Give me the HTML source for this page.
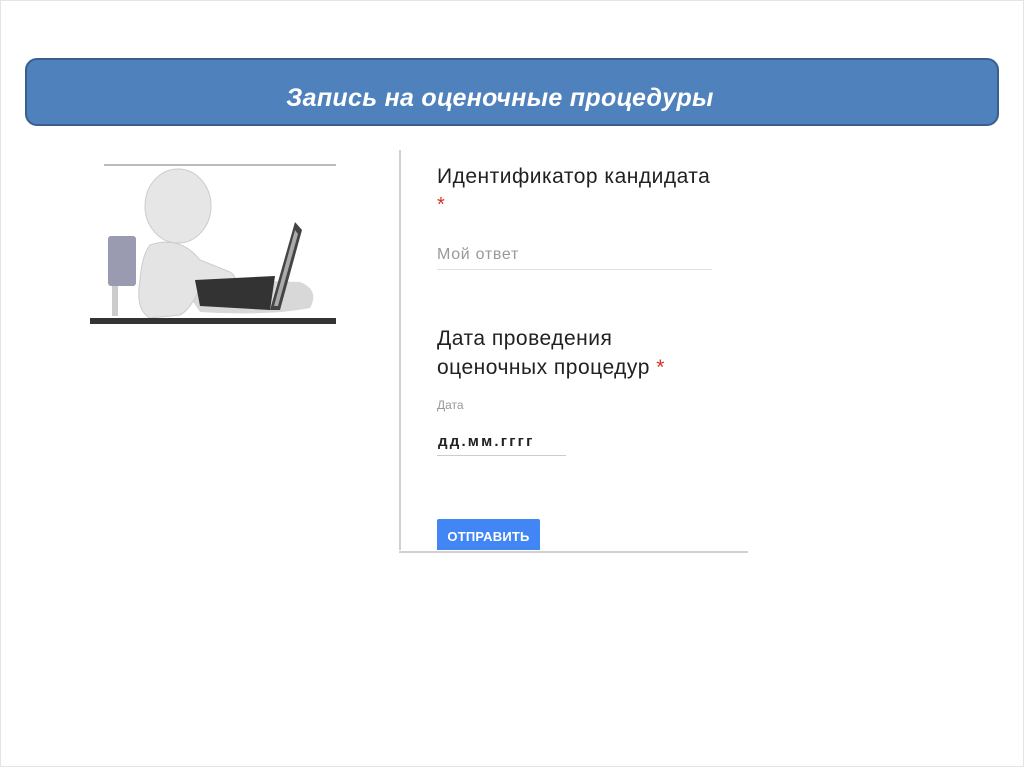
<!DOCTYPE html>
<html><head><meta charset="utf-8"><style>
body{margin:0;width:1024px;height:767px;background:#fff;position:relative;overflow:hidden;font-family:"Liberation Sans",Arial,sans-serif}
.frame{position:absolute;left:0;top:0;width:1022px;height:765px;border:1px solid #e4e4e4}
.banner{position:absolute;left:25px;top:58px;width:970px;height:64px;background:#4f81bd;border:2px solid #3b5f8c;border-radius:12px;box-sizing:content-box}
.banner span{position:absolute;left:0;right:0;top:24px;text-align:center;color:#fff;font-weight:bold;font-style:italic;font-size:25px;margin-left:-24px;letter-spacing:0.3px}
.t{position:absolute;color:#202124;white-space:nowrap}
.q{font-size:21px;letter-spacing:0.5px}
</style></head><body>
<div class="frame"></div>
<div class="banner"><span>Запись на оценочные процедуры</span></div>

<svg style="position:absolute;left:90px;top:160px" width="250" height="166" viewBox="0 0 250 166">
<line x1="14" y1="5" x2="246" y2="5" stroke="#bbb" stroke-width="2"/>
<path d="M95 130 Q130 118 210 122 Q230 130 220 148 Q180 156 110 152 Z" fill="#d8d8d8"/>
<rect x="18" y="76" width="28" height="50" fill="#9a9ab0" rx="3"/>
<rect x="22" y="126" width="6" height="30" fill="#ccc"/>
<ellipse cx="88" cy="46" rx="33" ry="37" fill="#e6e6e6" stroke="#ccc"/>
<path d="M60 85 Q90 75 110 100 L140 112 Q150 118 140 128 L110 128 Q100 150 90 155 L60 158 Q45 150 50 120 Q52 95 60 85Z" fill="#e4e4e4" stroke="#ccc"/>
<path d="M105 120 L185 116 L180 150 L110 146Z" fill="#333"/>
<path d="M180 150 L205 62 L212 70 L190 150Z" fill="#444"/>
<path d="M184 146 L205 70 L208 74 L188 146Z" fill="#aaa"/>
<rect x="0" y="158" width="246" height="6" fill="#333"/>
</svg>

<div style="position:absolute;left:399px;top:150px;width:2px;height:400px;background:#d0d0d0"></div>
<div style="position:absolute;left:399px;top:551px;width:349px;height:2px;background:#d0d0d0"></div>

<div class="t q" style="left:437px;top:165px">Идентификатор кандидата</div>
<div class="t" style="left:437px;top:194px;font-size:20px;color:#d93025">*</div>
<div class="t" style="left:437px;top:246px;font-size:16px;letter-spacing:0.7px;color:#999">Мой ответ</div>
<div style="position:absolute;left:437px;top:269px;width:275px;height:1px;background:#e0e0e0"></div>

<div class="t q" style="left:437px;top:327px">Дата проведения</div>
<div class="t q" style="left:437px;top:356px">оценочных процедур <span style="color:#d93025">*</span></div>
<div class="t" style="left:437px;top:398px;font-size:12px;color:#999">Дата</div>
<div class="t" style="left:438px;top:433px;font-size:15px;font-weight:bold;letter-spacing:2.2px">дд.мм.гггг</div>
<div style="position:absolute;left:437px;top:455px;width:129px;height:1px;background:#ccc"></div>

<div style="position:absolute;left:437px;top:519px;width:103px;height:31px;background:#4285f4;border-radius:2px 2px 0 0;color:#fff;font-weight:bold;font-size:13px;line-height:36px;text-align:center;letter-spacing:0.2px">ОТПРАВИТЬ</div>
</body></html>
